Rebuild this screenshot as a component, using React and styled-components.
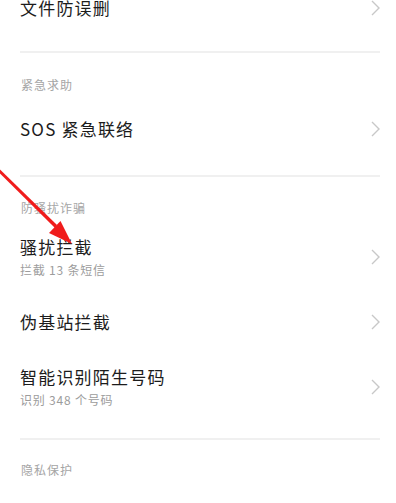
import React from 'react'
import styled, {createGlobalStyle} from 'styled-components'

const GlobalStyle = createGlobalStyle`
  html, body {
    margin: 0;
    padding: 0;
    background: #fff;
  }
  body {
    font-family: "Noto Sans CJK SC", "Noto Sans", sans-serif;
    overflow: hidden;
  }
`

const sections = [
  {
    items: [{title: '文件防误删'}],
    bottom: 11,
  },
  {
    header: '紧急求助',
    headTop: 25,
    headBottom: 4.5,
    items: [{title: 'SOS 紧急联络'}],
    bottom: 13,
  },
  {
    header: '防骚扰诈骗',
    headTop: 24,
    headBottom: 10,
    items: [
      {title: '骚扰拦截', sub: '拦截 13 条短信'},
      {title: '伪基站拦截'},
      {title: '智能识别陌生号码', sub: '识别 348 个号码'},
    ],
    bottom: 18,
  },
  {
    header: '隐私保护',
    headTop: 23.5,
    headBottom: 10,
    items: [],
    bottom: 0,
  },
]

export default function App() {
  return (
    <>
      <GlobalStyle />
      <Page>
        <List>
          {sections.map((s, i) => (
            <React.Fragment key={i}>
              {i > 0 && <Divider />}
              <Section bottom={s.bottom}>
                {s.header && (
                  <Header top={s.headTop} bottom={s.headBottom}>{s.header}</Header>
                )}
                {s.items.map(item => (
                  <Row key={item.title}>
                    <Texts>
                      <Title>{item.title}</Title>
                      {item.sub && <Sub>{item.sub}</Sub>}
                    </Texts>
                    <Chevron width="9" height="16" viewBox="0 0 9 16">
                      <polyline points="1,1 8,8 1,15" />
                    </Chevron>
                  </Row>
                ))}
              </Section>
            </React.Fragment>
          ))}
        </List>
        <Arrow width="396" height="503" viewBox="0 0 396 503">
          <polygon points="-4,169.5 -2,167.5 57,225 55,228" />
          <polygon points="72,244 49,233 60.5,221" />
        </Arrow>
      </Page>
    </>
  )
}

const Page = styled.div`
  position: relative;
  width: 396px;
  height: 503px;
  overflow: hidden;
  background: #fff;
`
const List = styled.div`
  display: flex;
  flex-direction: column;
  margin-top: -25px;
`
const Section = styled.div`
  display: flex;
  flex-direction: column;
  padding-bottom: ${p => p.bottom}px;
`
const Divider = styled.div`
  height: 2px;
  margin: 0 16px 0 20px;
  background: #f0f0f0;
`
const Header = styled.div`
  padding: ${p => p.top}px 20px ${p => p.bottom}px 21px;
  font-size: 12px;
  line-height: 14px;
  letter-spacing: 1px;
  color: #a5a5a5;
`
const Row = styled.div`
  height: 65px;
  display: flex;
  align-items: center;
  justify-content: space-between;
  padding: 0 16px 0 20px;
`
const Texts = styled.div`
  display: flex;
  flex-direction: column;
`
const Title = styled.div`
  font-size: 17px;
  line-height: 22px;
  letter-spacing: 1.2px;
  color: #1c1c1c;
`
const Sub = styled.div`
  margin-top: 3.5px;
  font-size: 12px;
  line-height: 17px;
  letter-spacing: 0.8px;
  color: #9c9c9c;
`
const Chevron = styled.svg`
  flex: none;
  fill: none;
  stroke: #c8c8c8;
  stroke-width: 1.4;
`
const Arrow = styled.svg`
  position: absolute;
  left: 0;
  top: 0;
  pointer-events: none;

  polygon {
    fill: #f01c1c;
  }
`
